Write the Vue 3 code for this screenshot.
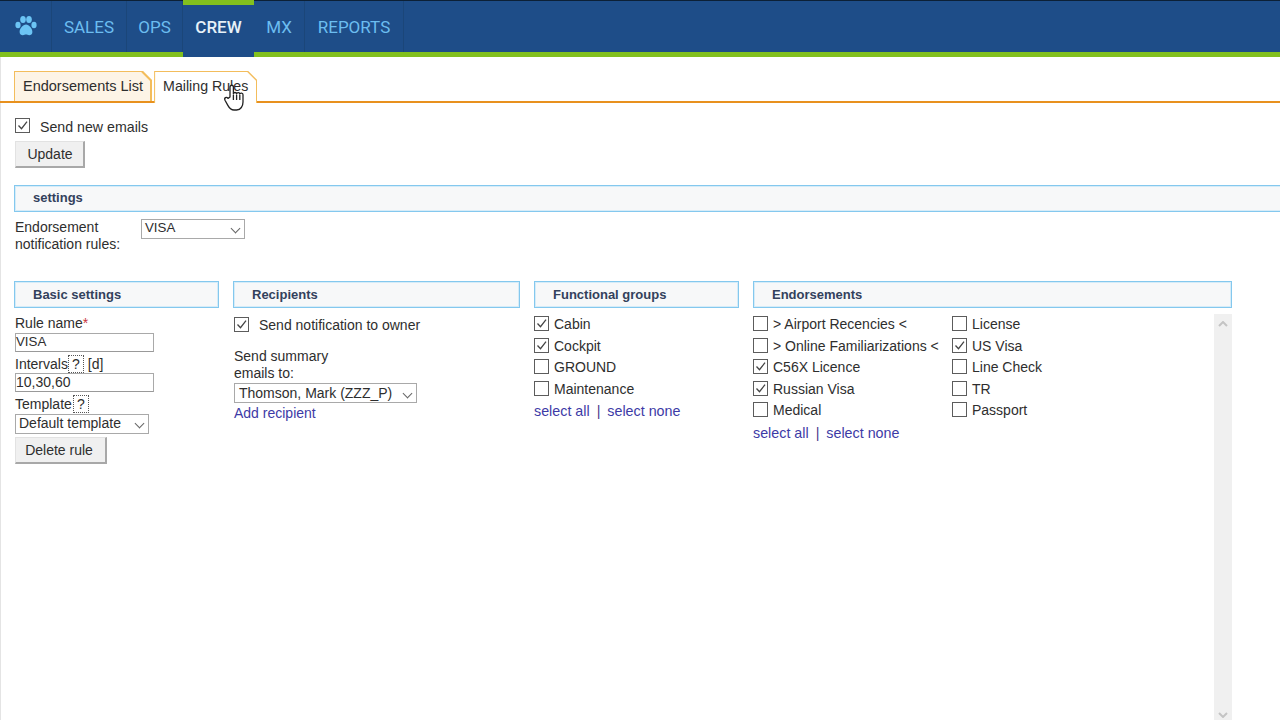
<script setup>
const navItems = [
  { label: 'SALES', width: 75 },
  { label: 'OPS', width: 56 },
  { label: 'CREW', width: 71, active: true },
  { label: 'MX', width: 51 },
  { label: 'REPORTS', width: 99 }
]

const groups = [
  { label: 'Cabin', on: true },
  { label: 'Cockpit', on: true },
  { label: 'GROUND', on: false },
  { label: 'Maintenance', on: false }
]

const endorsementsLeft = [
  { label: '> Airport Recencies <', on: false },
  { label: '> Online Familiarizations <', on: false },
  { label: 'C56X Licence', on: true },
  { label: 'Russian Visa', on: true },
  { label: 'Medical', on: false }
]

const endorsementsRight = [
  { label: 'License', on: false },
  { label: 'US Visa', on: true },
  { label: 'Line Check', on: false },
  { label: 'TR', on: false },
  { label: 'Passport', on: false }
]
</script>

<template>
  <div class="page">
    <header class="topbar">
      <div class="logo">
        <svg width="22" height="20" viewBox="0 0 22 20">
          <ellipse cx="3" cy="9" rx="2.6" ry="3.2" />
          <ellipse cx="8" cy="3.6" rx="2.8" ry="3.5" />
          <ellipse cx="14" cy="3.6" rx="2.8" ry="3.5" />
          <ellipse cx="19" cy="9" rx="2.6" ry="3.2" />
          <path d="M11 8.600c-3 0-6.400 4-6.400 7.400 0 2.200 1.600 3.200 3.200 3.200 1.300 0 2.200-.7 3.200-.7s1.900.7 3.200.7c1.600 0 3.200-1 3.200-3.200 0-3.400-3.400-7.400-6.400-7.400z" />
        </svg>
      </div>
      <nav class="nav">
        <a
          v-for="item in navItems"
          :key="item.label"
          class="nav-item"
          :class="{ active: item.active }"
          :style="{ width: item.width + 'px' }"
        >{{ item.label }}</a>
      </nav>
    </header>

    <div class="tabs">
      <div class="tab">
        <span class="tab-inner">Endorsements List</span>
      </div>
      <div class="tab current">
        <span class="tab-inner">Mailing Rules</span>
      </div>
    </div>

    <main class="content">
      <label class="check send-new">
        <span class="box">
          <svg width="13" height="13" viewBox="0 0 13 13"><path d="M2.500 6.500l3 3.200 5.500-7" /></svg>
        </span>
        <span>Send new emails</span>
      </label>
      <button class="btn update">Update</button>

      <div class="section-head settings-head">settings</div>

      <div class="rule-row">
        <div class="rule-label">Endorsement<br>notification rules:</div>
        <div class="select rule-select"><span>VISA</span><i class="chev"></i></div>
      </div>

      <div class="columns">
        <section>
          <div class="section-head">Basic settings</div>
          <div class="basic">
            <div class="field-label">Rule name<span class="req">*</span></div>
            <div class="input first-input">VISA</div>
            <div class="field-label">Intervals<span class="hint">?</span> [d]</div>
            <div class="input">10,30,60</div>
            <div class="field-label">Template<span class="hint template-hint">?</span></div>
            <div class="select template-select"><span>Default template</span><i class="chev"></i></div>
            <button class="btn delete">Delete rule</button>
          </div>
        </section>

        <section>
          <div class="section-head">Recipients</div>
          <div class="recipients">
            <label class="check owner">
              <span class="box">
                <svg width="13" height="13" viewBox="0 0 13 13"><path d="M2.500 6.500l3 3.200 5.500-7" /></svg>
              </span>
              <span>Send notification to owner</span>
            </label>
            <div class="summary">Send summary<br>emails to:</div>
            <div class="select recipient-select"><span>Thomson, Mark (ZZZ_P)</span><i class="chev"></i></div>
            <a class="link">Add recipient</a>
          </div>
        </section>

        <section>
          <div class="section-head">Functional groups</div>
          <div class="list">
            <label v-for="g in groups" :key="g.label" class="check row">
              <span class="box">
                <svg v-if="g.on" width="13" height="13" viewBox="0 0 13 13"><path d="M2.500 6.500l3 3.200 5.500-7" /></svg>
              </span>
              <span>{{ g.label }}</span>
            </label>
            <div class="select-links"><a class="link">select all</a><b>|</b><a class="link">select none</a></div>
          </div>
        </section>

        <section class="endorsements">
          <div class="section-head">Endorsements</div>
          <div class="end-body">
            <div class="end-left list">
              <label v-for="e in endorsementsLeft" :key="e.label" class="check row">
                <span class="box">
                  <svg v-if="e.on" width="13" height="13" viewBox="0 0 13 13"><path d="M2.500 6.500l3 3.200 5.500-7" /></svg>
                </span>
                <span>{{ e.label }}</span>
              </label>
              <div class="select-links"><a class="link">select all</a><b>|</b><a class="link">select none</a></div>
            </div>
            <div class="end-right list">
              <label v-for="e in endorsementsRight" :key="e.label" class="check row">
                <span class="box">
                  <svg v-if="e.on" width="13" height="13" viewBox="0 0 13 13"><path d="M2.500 6.500l3 3.200 5.500-7" /></svg>
                </span>
                <span>{{ e.label }}</span>
              </label>
            </div>
            <div class="scrollbar">
              <svg width="10" height="6" viewBox="0 0 10 6"><path d="M1 5l4-4 4 4" /></svg>
              <svg width="10" height="6" viewBox="0 0 10 6"><path d="M1 1l4 4 4-4" /></svg>
            </div>
          </div>
        </section>
      </div>
    </main>

    <svg class="cursor" width="24" height="30" viewBox="0 0 24 30">
      <path d="M7 14V4.200c0-2.600 3.400-2.600 3.400 0V11c0-2 3.200-2 3.200 0 .2-1.800 3.200-1.800 3.200.2.400-1.600 3.200-1.400 3.200.6v7.200c0 4-2.200 8-6.400 8h-2.600c-3.200 0-4.600-1.800-6-4.400L2 17.200c-1.200-2.400 1.600-3.800 3-1.800z" />
      <path d="M10.400 12v5M13.600 12v5M16.800 12v5" />
    </svg>
  </div>
</template>

<style>
html, body {
  margin: 0;
  background: #fff;
  overflow: hidden;
}
</style>

<style scoped>
.page {
  position: relative;
  width: 1280px;
  height: 720px;
  overflow: hidden;
  background: #fff;
  font-family: "Liberation Sans", Arial, sans-serif;
  font-size: 14px;
  color: #2e2e2e;
  box-shadow: inset 1px 0 0 #e4e4e4;
}

.topbar {
  display: flex;
  box-sizing: content-box;
  height: 51px;
  background: #1e4d88;
  border-top: 1px solid #0c2036;
  border-bottom: 5px solid #82c01e;
}

.logo {
  width: 52px;
  display: flex;
  align-items: center;
  justify-content: center;
  border-right: 1px solid #1b4679;
  box-sizing: border-box;
  padding-bottom: 1px;
}

.logo svg {
  fill: #6cc4f4;
}

.nav {
  display: flex;
}

.nav-item {
  box-sizing: border-box;
  height: 51px;
  display: flex;
  align-items: center;
  justify-content: center;
  font-family: Roboto, "Liberation Sans", sans-serif;
  font-size: 17px;
  color: #6cbdf0;
  border-right: 1px solid #1b4679;
}

.nav-item.active {
  color: #e6f1f8;
  font-weight: 500;
  background: #1e4d88;
  border-top: 5px solid #82c01e;
  margin-top: -1px;
  height: 57px;
  padding-bottom: 9px;
  border-right: 0;
}

.tabs {
  display: flex;
  gap: 2px;
  height: 46px;
  box-sizing: border-box;
  padding: 14px 0 0 14px;
  border-bottom: 2px solid #e8911e;
}

.tab {
  height: 30px;
  background: #f3bd5c;
  clip-path: polygon(0 0, calc(100% - 9px) 0, 100% 9px, 100% 100%, 0 100%);
  padding: 1px 2px 0 1px;
  box-sizing: border-box;
}

.tab-inner {
  display: flex;
  align-items: center;
  height: 29px;
  padding: 0 7px 1px 8px;
  background: #fdf4e6;
  clip-path: polygon(0 0, calc(100% - 9px) 0, 100% 9px, 100% 100%, 0 100%);
  font-size: 14.500px;
  box-sizing: border-box;
}

.tab.current {
  height: 32px;
  padding-right: 1px;
  margin-bottom: -2px;
}

.tab.current .tab-inner {
  height: 31px;
  padding-bottom: 3px;
  background: #fff;
  font-size: 14.200px;
  padding-right: 8px;
}

.content {
  padding: 16px 0 0 14px;
}

.check {
  display: flex;
  align-items: center;
}

.box {
  box-sizing: border-box;
  flex: none;
  width: 15px;
  height: 15px;
  margin-top: -1px;
  border: 1px solid #5c5c5c;
  background: #fff;
  display: flex;
  align-items: center;
  justify-content: center;
}

.box svg {
  fill: none;
  stroke: #444;
  stroke-width: 1.300;
}

.send-new {
  height: 16px;
  padding-left: 1px;
  gap: 10px;
  font-size: 14.200px;
}

.send-new .box {
  margin-top: -4px;
}

.btn {
  display: block;
  box-sizing: border-box;
  font: inherit;
  color: #2e2e2e;
  background: #f0f0f0;
  border: 1px solid #e2e2e2;
  border-right: 2px solid #a8a8a8;
  border-bottom: 2px solid #a8a8a8;
  height: 27px;
  padding: 0;
}

.update {
  width: 70px;
  margin: 6px 0 0 1px;
  padding-left: 1px;
}

.section-head {
  box-sizing: border-box;
  height: 27px;
  display: flex;
  align-items: center;
  padding: 0 0 2px 18px;
  background: #f7f8f9;
  border: 1px solid #84c8ee;
  box-shadow: inset 0 0 0 1px #d6ecf8;
  font-size: 13px;
  font-weight: bold;
  color: #33415c;
}

.columns .section-head {
  padding-bottom: 1px;
}

.settings-head {
  margin-top: 17px;
  margin-right: -2px;
}

.rule-row {
  display: flex;
  margin-top: 7px;
  height: 62px;
}

.rule-label {
  width: 126px;
  padding-left: 1px;
  line-height: 17px;
}

.select {
  box-sizing: border-box;
  display: flex;
  align-items: center;
  justify-content: space-between;
  height: 20px;
  background: #fff;
  border: 1px solid #a9a9a9;
  padding: 0 5px 1px 3px;
  position: relative;
}

.chev {
  display: block;
  width: 6px;
  height: 6px;
  border-right: 1px solid #666;
  border-bottom: 1px solid #666;
  transform: rotate(45deg);
  margin-top: 1px;
}

.rule-select {
  width: 104px;
  padding-bottom: 3px;
  font-size: 13.300px;
}

.columns {
  display: grid;
  grid-template-columns: 205px 287px 205px 479px;
  column-gap: 14px;
}

.basic {
  padding: 7px 0 0 1px;
}

.field-label {
  height: 17px;
  line-height: 17px;
}

.req {
  color: #c8323c;
}

.hint {
  display: inline-block;
  box-sizing: border-box;
  width: 14px;
  height: 16px;
  text-align: center;
  outline: 1px dotted #555;
  line-height: 16px;
  margin: 0 1px 0 1px;
  vertical-align: top;
}

.template-hint {
  margin-left: 2px;
}

.input {
  box-sizing: border-box;
  width: 139px;
  height: 19px;
  line-height: 16px;
  border: 1px solid #a9a9a9;
  border-bottom-color: #999;
  padding-left: 0;
  margin-bottom: 4px;
}

.first-input {
  margin-top: 1px;
  font-size: 13.300px;
}

.template-select {
  width: 134px;
  margin-top: 1px;
  padding-left: 3px;
  padding-bottom: 2px;
}

.delete {
  width: 92px;
  margin-top: 3px;
  padding-right: 3px;
}

.recipients {
  padding: 9px 0 0 1px;
}

.owner {
  height: 16px;
  gap: 10px;
}

.summary {
  margin-top: 15px;
  line-height: 17px;
}

.recipient-select {
  width: 183px;
  margin-top: 1px;
  padding-left: 4px;
}

.link {
  color: #3d3aa6;
}

.recipients .link {
  display: block;
  margin-top: 2px;
}

.list {
  padding-top: 5.600px;
}

.row {
  height: 21.500px;
  gap: 5px;
}

.select-links {
  display: flex;
  align-items: center;
  gap: 7px;
  height: 21px;
  margin-top: 1px;
  font-size: 14.300px;
}

.select-links b {
  font-weight: normal;
  color: #4a3a8c;
}

.end-body {
  display: flex;
  height: 412px;
  position: relative;
}

.end-left {
  width: 199px;
  flex: none;
}

.end-right {
  flex: 1;
}

.scrollbar {
  flex: none;
  width: 18px;
  margin-top: 6px;
  background: #f0f0f0;
  display: flex;
  flex-direction: column;
  align-items: center;
  justify-content: space-between;
  padding: 7px 0 2px;
  box-sizing: border-box;
}

.scrollbar svg {
  fill: none;
  stroke: #c4c4c4;
  stroke-width: 2;
}

.cursor {
  position: absolute;
  left: 223px;
  top: 83px;
}

.cursor path {
  fill: #fff;
  stroke: #222;
  stroke-width: 1.300;
  stroke-linejoin: round;
}
</style>
